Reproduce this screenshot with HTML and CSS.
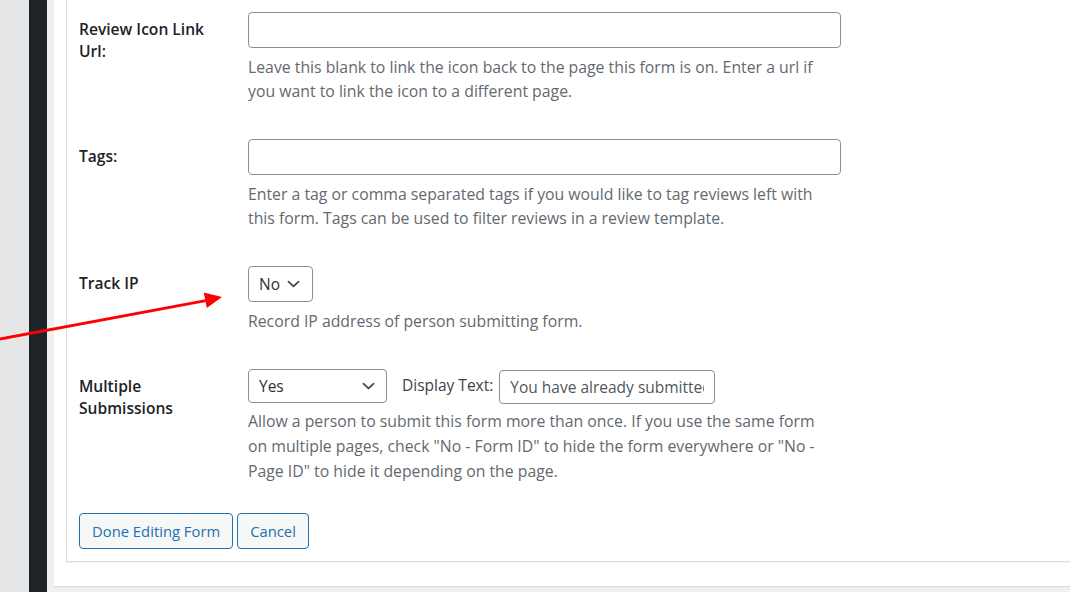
FILE: index.html
```html
<!DOCTYPE html>
<html lang="en">
<head>
<meta charset="utf-8">
<title>Form settings</title>
<link rel="stylesheet" href="styles.css">
</head>
<body>
<div class="page">
  <div class="gutter"></div>
  <div class="sidebar"></div>
  <main class="main">
    <div class="panel">
      <div class="box">
        <div class="row">
          <div class="label">Review Icon Link Url:</div>
          <div class="field">
            <input class="text wide" type="text" value="">
            <p class="desc">Leave this blank to link the icon back to the page this form is on. Enter a url if you want to link the icon to a different page.</p>
          </div>
        </div>
        <div class="row">
          <div class="label">Tags:</div>
          <div class="field">
            <input class="text wide" type="text" value="">
            <p class="desc">Enter a tag or comma separated tags if you would like to tag reviews left with this form. Tags can be used to filter reviews in a review template.</p>
          </div>
        </div>
        <div class="row">
          <div class="label">Track IP</div>
          <div class="field">
            <div class="select tall"><span>No</span><svg class="chev" viewBox="0 0 14 8" width="13" height="8"><path d="M1.5 1.5 L7 6.5 L12.5 1.5" fill="none" stroke="#3c434a" stroke-width="1.8" stroke-linecap="round" stroke-linejoin="round"/></svg></div>
            <p class="desc">Record IP address of person submitting form.</p>
          </div>
        </div>
        <div class="row last">
          <div class="label">Multiple Submissions</div>
          <div class="field">
            <div class="inline">
              <div class="select short yes"><span>Yes</span><svg class="chev" viewBox="0 0 14 8" width="13" height="8"><path d="M1.5 1.5 L7 6.5 L12.5 1.5" fill="none" stroke="#3c434a" stroke-width="1.8" stroke-linecap="round" stroke-linejoin="round"/></svg></div>
              <span class="inline-label">Display Text:</span>
              <input class="text display" type="text" value="You have already submitted this form.">
            </div>
            <p class="desc multi">Allow a person to submit this form more than once. If you use the same form on multiple pages, check "No - Form ID" to hide the form everywhere or "No - Page ID" to hide it depending on the page.</p>
          </div>
        </div>
        <div class="actions">
          <button class="btn" type="button">Done Editing Form</button>
          <button class="btn" type="button">Cancel</button>
        </div>
      </div>
    </div>
  </main>
  <svg class="arrow" viewBox="0 0 240 70" width="240" height="70">
    <line x1="-2" y1="59.4" x2="207" y2="20.4" stroke="#ff0000" stroke-width="3"/>
    <polygon points="222,17 206.8,28.1 203.8,12.4" fill="#ff0000"/>
  </svg>
</div>
</body>
</html>
```
FILE: styles.css
```css
* { box-sizing: border-box; }

body {
  margin: 0;
  background: #f0f0f1;
  font-family: "Open Sans", "Noto Sans", sans-serif;
  font-size: 15.8px;
  color: #1d2327;
}

.page {
  position: relative;
  display: flex;
  height: 592px;
  overflow: hidden;
}

.gutter {
  flex: none;
  width: 29px;
  background: #e5e6e7;
}

.sidebar {
  flex: none;
  width: 18px;
  background: #1d2327;
}

.main {
  flex: 1;
  padding-left: 7px;
  background: #f0f0f1;
}

.panel {
  background: #fff;
  border-bottom: 1px solid #dcdcde;
  padding: 0 0 24px 12px;
}

.box {
  border-left: 1px solid #dcdcde;
  border-bottom: 1px solid #dcdcde;
  box-shadow: 0 1px 1px rgba(0, 0, 0, 0.04);
  padding: 12px 0 12px 12px;
}

.row {
  display: grid;
  grid-template-columns: 169px 1fr;
  margin-bottom: 36px;
}

.row.last {
  margin-bottom: 29px;
}

.label {
  width: 150px;
  padding-top: 6px;
  font-weight: 600;
  font-size: 15.6px;
  line-height: 22px;
  color: #1d2327;
}

.field {
  min-width: 0;
}

.text {
  display: block;
  height: 36px;
  border: 1px solid #8c8f94;
  border-radius: 4px;
  background: #fff;
  padding: 0 10px;
  font: inherit;
  font-size: 15.5px;
  color: #50575e;
  outline: none;
}

.text.wide {
  width: 593px;
}

.desc {
  margin: 7px 0 0;
  max-width: 582px;
  line-height: 24px;
  color: #646970;
}

.desc.multi {
  line-height: 25px;
  margin-top: 6px;
}

.select {
  display: inline-flex;
  align-items: center;
  justify-content: space-between;
  gap: 7px;
  height: 36px;
  padding: 0 12px 0 10px;
  border: 1px solid #8c8f94;
  border-radius: 4px;
  background: #fff;
  color: #2c3338;
  font-size: 15.5px;
  vertical-align: top;
}

.select.short {
  height: 34px;
}

.select.yes {
  width: 139px;
  padding-right: 11px;
}

.chev {
  display: block;
  flex: none;
}

.inline {
  display: flex;
  align-items: center;
  height: 34px;
}

.inline-label {
  margin-left: 15px;
  margin-right: 6px;
  font-size: 15.5px;
  color: #3c434a;
  position: relative;
  top: -1px;
}

.text.display {
  width: 216px;
  height: 34px;
  position: relative;
  top: 1px;
}

.actions {
  display: flex;
  gap: 4px;
}

.btn {
  height: 36px;
  padding: 0 12px;
  border: 1px solid #2271b1;
  border-radius: 4px;
  background: #f6f7f7;
  color: #2271b1;
  font: inherit;
  font-size: 14.8px;
  cursor: pointer;
}

.arrow {
  position: absolute;
  left: 0;
  top: 280px;
  overflow: visible;
}
```
